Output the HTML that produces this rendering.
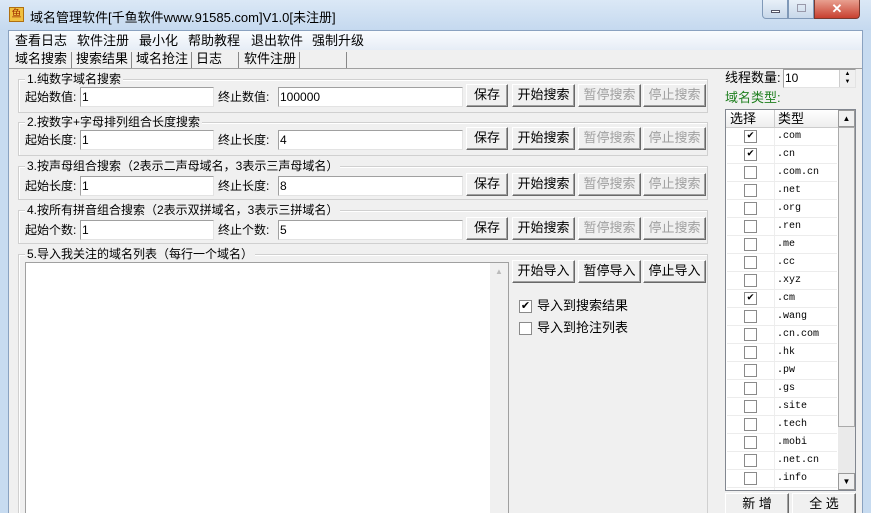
<!DOCTYPE html><html><head><meta charset="utf-8"><style>
*{box-sizing:border-box;margin:0;padding:0}
html{height:513px;overflow:hidden}
body{width:871px;height:513px;overflow:hidden;background:#c7dbf0;font:12px "Liberation Sans","Noto Sans CJK SC",sans-serif;color:#000;position:relative}
.a{position:absolute}
.title{left:0;top:0;width:871px;height:30px;background:linear-gradient(#dbe8f6,#c5d9ef)}
.client{left:8px;top:30px;width:855px;height:483px;background:#f0f0f0;border:1px solid #8aa2c0;border-bottom:none;overflow:hidden}
.grp{position:absolute;border:1px solid #d0d0d0;box-shadow:inset 1px 1px 0 #fff}
.gl{position:absolute;background:#f0f0f0;padding:0 2px;line-height:14px;top:-8px;left:6px;white-space:nowrap}
.in{position:absolute;background:#fff;border:1px solid #a0a0a0;border-right-color:#e3e3e3;border-bottom-color:#e3e3e3;height:20px;line-height:18px;padding-left:1px}
.bt{position:absolute;border:1px solid;border-color:#fff #696969 #696969 #fff;box-shadow:inset -1px -1px 0 #a0a0a0;background:#f0f0f0;text-align:center;line-height:20px;height:23px;font-size:13px}
.dis{color:#a0a0a0}
.lb{position:absolute;line-height:20px;font-size:12px;white-space:nowrap}
.cb{position:absolute;width:13px;height:13px;background:#fff;border:1px solid #8a8a8a;font-size:11px;line-height:11px;text-align:center}
.row{position:absolute;left:2px;width:110px;height:18px;border-bottom:1px solid #ececec;font:10px "Liberation Mono","DejaVu Sans Mono",monospace;line-height:18px}
.row span{position:absolute;left:50px}
.row .cb{left:17px;top:2px}
.m{position:absolute;font-size:13px;line-height:18px;white-space:nowrap}
</style></head><body>
<div class="a title"></div>
<div class="a" style="left:9px;top:7px;width:15px;height:15px;background:#f0c040;border:1px solid #b07010;font-size:10px;line-height:13px;text-align:center;color:#a03000">鱼</div>
<div class="a" style="left:30px;top:7px;font-size:13px">域名管理软件[千鱼软件www.91585.com]V1.0[未注册]</div>
<div class="a" style="left:762px;top:0;width:26px;height:19px;border:1px solid #8099b8;border-top:none;border-radius:0 0 0 4px;background:linear-gradient(#e8f0f8,#c8d8ea)"><div class="a" style="left:8px;top:10px;width:9px;height:3px;background:#fff;border:1px solid #556"></div></div>
<div class="a" style="left:788px;top:0;width:26px;height:19px;border:1px solid #8099b8;border-top:none;background:linear-gradient(#e8f0f8,#c8d8ea)"><div class="a" style="left:8px;top:4px;width:9px;height:8px;border:1px solid #99a"></div></div>
<div class="a" style="left:814px;top:0;width:46px;height:19px;border:1px solid #7a3a30;border-top:none;border-radius:0 0 4px 0;background:linear-gradient(#e8a090,#c84030);color:#fff;font:bold 13px sans-serif;text-align:center;line-height:18px">✕</div>
<div class="a client">
<div class="a" style="left:0;top:0;width:853px;height:19px;background:linear-gradient(#fafcfe,#e6edf6)"></div>
<span class="m" style="left:6px;top:1px">查看日志</span><span class="m" style="left:68px;top:1px">软件注册</span><span class="m" style="left:130px;top:1px">最小化</span><span class="m" style="left:179px;top:1px">帮助教程</span><span class="m" style="left:242px;top:1px">退出软件</span><span class="m" style="left:303px;top:1px">强制升级</span>
<div class="a" style="left:0;top:37px;width:853px;height:1px;background:#a0a0a0"></div>
<span class="m" style="left:6px;top:19px">域名搜索</span><span class="m" style="left:67px;top:19px">搜索结果</span><span class="m" style="left:127px;top:19px">域名抢注</span><span class="m" style="left:187px;top:19px">日志</span><span class="m" style="left:235px;top:19px">软件注册</span>
<div class="a" style="left:62px;top:21px;width:1px;height:16px;background:#888"></div>
<div class="a" style="left:122px;top:21px;width:1px;height:16px;background:#888"></div>
<div class="a" style="left:182px;top:21px;width:1px;height:16px;background:#888"></div>
<div class="a" style="left:229px;top:21px;width:1px;height:16px;background:#888"></div>
<div class="a" style="left:290px;top:21px;width:1px;height:16px;background:#888"></div>
<div class="a" style="left:337px;top:21px;width:1px;height:16px;background:#888"></div>
</div>
<div class="grp" style="left:18px;top:79px;width:690px;height:34px"><div class="gl">1.纯数字域名搜索</div></div>
<div class="grp" style="left:18px;top:122px;width:690px;height:34px"><div class="gl">2.按数字+字母排列组合长度搜索</div></div>
<div class="grp" style="left:18px;top:166px;width:690px;height:34px"><div class="gl">3.按声母组合搜索（2表示二声母域名，3表示三声母域名）</div></div>
<div class="grp" style="left:18px;top:210px;width:690px;height:34px"><div class="gl">4.按所有拼音组合搜索（2表示双拼域名，3表示三拼域名）</div></div>
<div class="grp" style="left:18px;top:254px;width:690px;height:270px"><div class="gl">5.导入我关注的域名列表（每行一个域名）</div></div>

<div class="lb" style="left:25px;top:87px">起始数值:</div><div class="in" style="left:80px;top:87px;width:134px">1</div>
<div class="lb" style="left:218px;top:87px">终止数值:</div><div class="in" style="left:278px;top:87px;width:185px">100000</div>
<div class="lb" style="left:25px;top:130px">起始长度:</div><div class="in" style="left:80px;top:130px;width:134px">1</div>
<div class="lb" style="left:218px;top:130px">终止长度:</div><div class="in" style="left:278px;top:130px;width:185px">4</div>
<div class="lb" style="left:25px;top:176px">起始长度:</div><div class="in" style="left:80px;top:176px;width:134px">1</div>
<div class="lb" style="left:218px;top:176px">终止长度:</div><div class="in" style="left:278px;top:176px;width:185px">8</div>
<div class="lb" style="left:25px;top:220px">起始个数:</div><div class="in" style="left:80px;top:220px;width:134px">1</div>
<div class="lb" style="left:218px;top:220px">终止个数:</div><div class="in" style="left:278px;top:220px;width:185px">5</div>

<div class="bt" style="left:466px;top:84px;width:42px">保存</div><div class="bt" style="left:512px;top:84px;width:63px">开始搜索</div><div class="bt dis" style="left:578px;top:84px;width:63px">暂停搜索</div><div class="bt dis" style="left:643px;top:84px;width:63px">停止搜索</div>
<div class="bt" style="left:466px;top:127px;width:42px">保存</div><div class="bt" style="left:512px;top:127px;width:63px">开始搜索</div><div class="bt dis" style="left:578px;top:127px;width:63px">暂停搜索</div><div class="bt dis" style="left:643px;top:127px;width:63px">停止搜索</div>
<div class="bt" style="left:466px;top:173px;width:42px">保存</div><div class="bt" style="left:512px;top:173px;width:63px">开始搜索</div><div class="bt dis" style="left:578px;top:173px;width:63px">暂停搜索</div><div class="bt dis" style="left:643px;top:173px;width:63px">停止搜索</div>
<div class="bt" style="left:466px;top:217px;width:42px">保存</div><div class="bt" style="left:512px;top:217px;width:63px">开始搜索</div><div class="bt dis" style="left:578px;top:217px;width:63px">暂停搜索</div><div class="bt dis" style="left:643px;top:217px;width:63px">停止搜索</div>

<div class="a" style="left:25px;top:262px;width:484px;height:260px;background:#fff;border:1px solid #a0a0a0"></div>
<div class="a" style="left:490px;top:263px;width:18px;height:250px;background:#f0f0f0;color:#bbb;font-size:8px;text-align:center;line-height:18px">▲</div>
<div class="bt" style="left:512px;top:260px;width:63px">开始导入</div><div class="bt" style="left:578px;top:260px;width:63px">暂停导入</div><div class="bt" style="left:643px;top:260px;width:63px">停止导入</div>
<div class="cb" style="left:519px;top:300px">✔</div><div class="lb" style="left:537px;top:296px;font-size:13px">导入到搜索结果</div>
<div class="cb" style="left:519px;top:322px"></div><div class="lb" style="left:537px;top:318px;font-size:13px">导入到抢注列表</div>

<div class="lb" style="left:725px;top:68px;font-size:13px">线程数量:</div>
<div class="in" style="left:783px;top:69px;width:73px;height:19px;line-height:17px">10</div>
<div class="a" style="left:839px;top:70px;width:16px;height:17px;background:#f0f0f0;border-left:1px solid #ccc;font-size:6px;line-height:8px;text-align:center">▲<br>▼</div>
<div class="lb" style="left:725px;top:88px;color:#208020;font-size:13px">域名类型:</div>
<div class="a" style="left:725px;top:109px;width:131px;height:382px;background:#fff;border:1px solid #828790">
<div class="a" style="left:0;top:0;width:112px;height:18px;background:linear-gradient(#fff,#eee);border-bottom:1px solid #ccc;font-size:13px;line-height:17px"><span class="a" style="left:4px">选择</span><span class="a" style="left:48px;border-left:1px solid #ccc;padding-left:3px">类型</span></div>
<div class="a" style="left:112px;top:0;width:17px;height:380px;background:#eaeaea"><div class="a" style="left:0;top:0;width:17px;height:17px;background:#f0f0f0;border:1px solid #999;font-size:8px;text-align:center;line-height:15px">▲</div><div class="a" style="left:0;top:17px;width:17px;height:300px;background:#f0f0f0;border:1px solid #aaa"></div><div class="a" style="left:0;top:363px;width:17px;height:17px;background:#f0f0f0;border:1px solid #999;font-size:8px;text-align:center;line-height:15px">▼</div></div>
<div class="a" style="left:48px;top:18px;width:1px;height:362px;background:#eee"></div>
</div>
<div class="a" style="left:725px;top:128px">
<div class="row" style="top:0"><div class="cb">✔</div><span>.com</span></div>
<div class="row" style="top:18px"><div class="cb">✔</div><span>.cn</span></div>
<div class="row" style="top:36px"><div class="cb"></div><span>.com.cn</span></div>
<div class="row" style="top:54px"><div class="cb"></div><span>.net</span></div>
<div class="row" style="top:72px"><div class="cb"></div><span>.org</span></div>
<div class="row" style="top:90px"><div class="cb"></div><span>.ren</span></div>
<div class="row" style="top:108px"><div class="cb"></div><span>.me</span></div>
<div class="row" style="top:126px"><div class="cb"></div><span>.cc</span></div>
<div class="row" style="top:144px"><div class="cb"></div><span>.xyz</span></div>
<div class="row" style="top:162px"><div class="cb">✔</div><span>.cm</span></div>
<div class="row" style="top:180px"><div class="cb"></div><span>.wang</span></div>
<div class="row" style="top:198px"><div class="cb"></div><span>.cn.com</span></div>
<div class="row" style="top:216px"><div class="cb"></div><span>.hk</span></div>
<div class="row" style="top:234px"><div class="cb"></div><span>.pw</span></div>
<div class="row" style="top:252px"><div class="cb"></div><span>.gs</span></div>
<div class="row" style="top:270px"><div class="cb"></div><span>.site</span></div>
<div class="row" style="top:288px"><div class="cb"></div><span>.tech</span></div>
<div class="row" style="top:306px"><div class="cb"></div><span>.mobi</span></div>
<div class="row" style="top:324px"><div class="cb"></div><span>.net.cn</span></div>
<div class="row" style="top:342px"><div class="cb"></div><span>.info</span></div>
</div>
<div class="bt" style="left:725px;top:493px;width:64px">新 增</div>
<div class="bt" style="left:792px;top:493px;width:64px">全 选</div>
</body></html>
